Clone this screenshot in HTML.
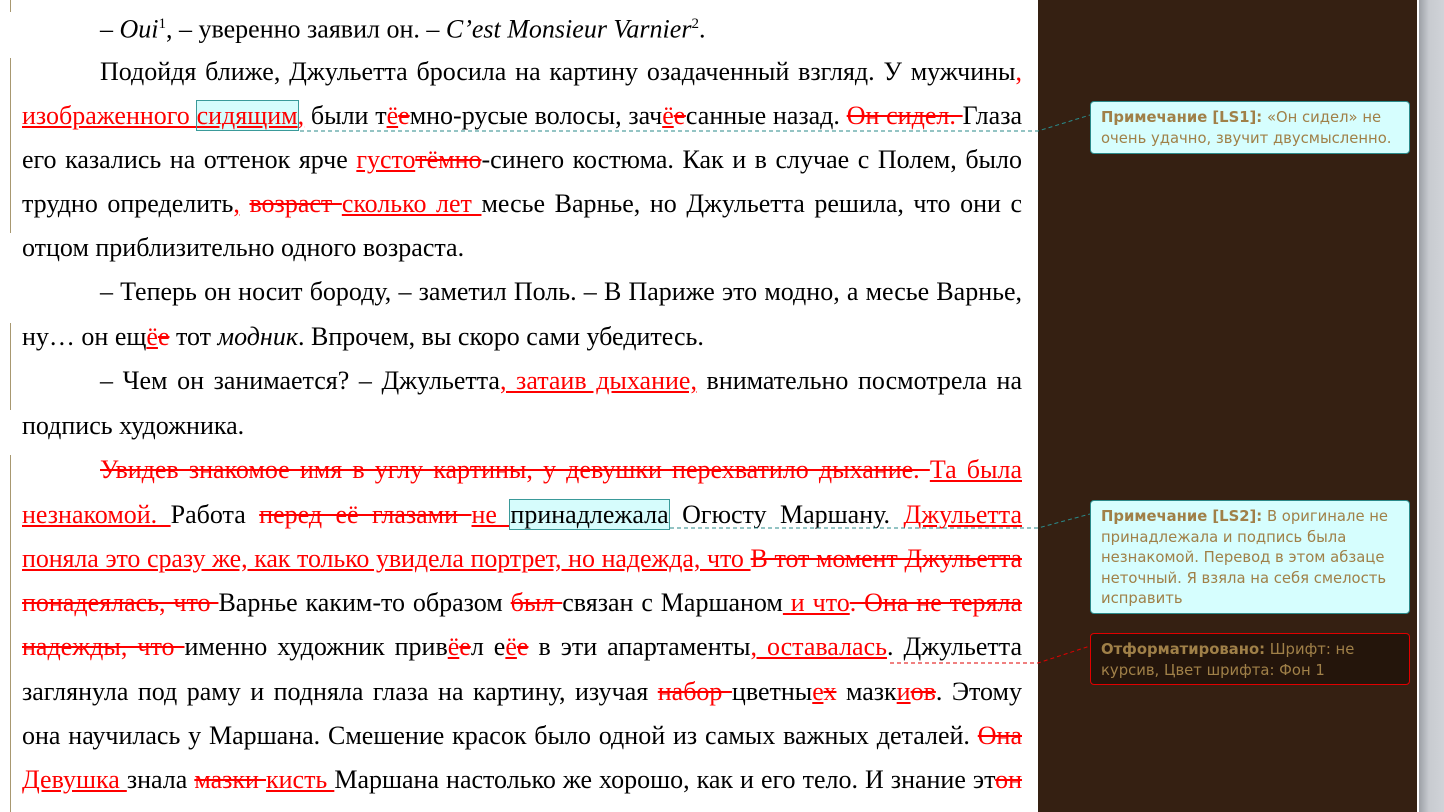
<!DOCTYPE html>
<html><head><meta charset="utf-8"><style>
body{margin:0;width:1444px;height:812px;overflow:hidden;background:#fff;position:relative;font-family:"Liberation Serif",serif;}
.page{position:absolute;left:0;top:0;width:1038px;height:812px;background:#fff;}
.ln{position:absolute;left:22px;width:1000px;font-size:26px;line-height:30px;margin-top:3px;color:#000;white-space:nowrap;text-align:justify;text-align-last:justify;}
.ln.l{text-align-last:left;}
.i{color:#f00;text-decoration:underline;}
.d{color:#f00;text-decoration:line-through;}
.h{background:#d6fcfc;outline:1px solid #3a9a9a;}
.bar{position:absolute;left:10px;width:1px;background:#a89870;}
.panel{position:absolute;left:1038px;top:0;width:379px;height:812px;background:#352012;}
.wl{position:absolute;left:1417px;top:0;width:2px;height:812px;background:#fff;}
.gr{position:absolute;left:1419px;top:0;width:25px;height:812px;background:linear-gradient(90deg,#9ca0a6,#c8cbd0 40%,#d0d3d8);}
.bal{position:absolute;left:1090px;width:298px;padding:6px 10px;font-family:"DejaVu Sans","Liberation Sans",sans-serif;font-size:14.8px;line-height:20.5px;color:#a08048;border-radius:4px;}
.bal b{color:#a08048;}
.c{background:#d6fefe;border:1px solid #2a8a8a;}
.f{background:#24150b;border:1px solid #e00000;}
</style></head><body>
<div class="page"></div>
<div class="bar" style="top:0;height:12px"></div>
<div class="bar" style="top:58px;height:175px"></div>
<div class="bar" style="top:323px;height:87px"></div>
<div class="bar" style="top:455px;height:357px"></div>

<div class="ln l" style="top:6px;padding-left:78px;width:922px">– <i>Oui</i><sup style="font-size:15px">1</sup>, – уверенно заявил он. – <i>C’est Monsieur Varnier</i><sup style="font-size:15px">2</sup>.</div>
<div class="ln" style="top:54px;padding-left:78px;width:922px">Подойдя ближе, Джульетта бросила на картину озадаченный взгляд. У мужчины<span class="i">,</span></div>
<div class="ln" style="top:98px"><span class="i">изображенного </span><span class="h"><span class="i">сидящим</span></span><span class="i">,</span> были т<span class="i">ё</span><span class="d">е</span>мно-русые волосы, зач<span class="i">ё</span><span class="d">е</span>санные назад. <span class="d">Он сидел. </span>Глаза</div>
<div class="ln" style="top:142px">его казались на оттенок ярче <span class="i">густо</span><span class="d">тёмно</span>-синего костюма. Как и в случае с Полем, было</div>
<div class="ln" style="top:186px">трудно определить<span class="i">,</span> <span class="d">возраст </span><span class="i">сколько лет </span>месье Варнье, но Джульетта решила, что они с</div>
<div class="ln l" style="top:230px">отцом приблизительно одного возраста.</div>
<div class="ln" style="top:274px;padding-left:78px;width:922px">– Теперь он носит бороду, – заметил Поль. – В Париже это модно, а месье Варнье,</div>
<div class="ln l" style="top:319px">ну… он ещ<span class="i">ё</span><span class="d">е</span> тот <i>модник</i>. Впрочем, вы скоро сами убедитесь.</div>
<div class="ln" style="top:363px;padding-left:78px;width:922px">– Чем он занимается? – Джульетта<span class="i">, затаив дыхание,</span> внимательно посмотрела на</div>
<div class="ln l" style="top:408px">подпись художника.</div>
<div class="ln" style="top:452px;padding-left:78px;width:922px"><span class="d">Увидев знакомое имя в углу картины, у девушки перехватило дыхание. </span><span class="i">Та была</span></div>
<div class="ln" style="top:497px"><span class="i">незнакомой. </span>Работа <span class="d">перед её глазами </span><span class="i">не </span><span class="h">принадлежала</span> Огюсту Маршану. <span class="i">Джульетта</span></div>
<div class="ln" style="top:541px;letter-spacing:-0.1px"><span class="i">поняла это сразу же, как только увидела портрет, но надежда, что </span><span class="d">В тот момент Джульетта</span></div>
<div class="ln" style="top:585px"><span class="d">понадеялась, что </span>Варнье каким-то образом <span class="d">был </span>связан с Маршаном<span class="i"> и что</span><span class="d">. Она не теряла</span></div>
<div class="ln" style="top:629px"><span class="d">надежды, что </span>именно художник прив<span class="i">ё</span><span class="d">е</span>л е<span class="i">ё</span><span class="d">е</span> в эти апартаменты<span class="i">, оставалась</span>. Джульетта</div>
<div class="ln" style="top:674px">заглянула под раму и подняла глаза на картину, изучая <span class="d">набор </span>цветны<span class="i">е</span><span class="d">х</span> мазк<span class="i">и</span><span class="d">ов</span>. Этому</div>
<div class="ln" style="top:718px">она научилась у Маршана. Смешение красок было одной из самых важных деталей. <span class="d">Она</span></div>
<div class="ln" style="top:762px"><span class="i">Девушка </span>знала <span class="d">мазки </span><span class="i">кисть </span>Маршана настолько же хорошо, как и его тело. И знание эт<span class="d">он</span></div>

<div class="panel"></div>
<div class="wl"></div>
<div class="gr"></div>
<svg style="position:absolute;left:0;top:0" width="1444" height="812">
<path d="M300 131 H1038 L1090 115" stroke="#2a8a8a" stroke-dasharray="4 3" fill="none"/>
<path d="M670 528 H1038 L1090 514" stroke="#2a8a8a" stroke-dasharray="4 3" fill="none"/>
<path d="M890 663 H1038 L1090 646" stroke="#e00000" stroke-dasharray="4 3" fill="none"/>
</svg>
<div class="bal c" style="top:101px;height:39px"><b>Примечание [LS1]:</b> «Он сидел» не очень удачно, звучит двусмысленно.</div>
<div class="bal c" style="top:500px;height:100px"><b>Примечание [LS2]:</b> В оригинале не принадлежала и подпись была незнакомой. Перевод в этом абзаце неточный. Я взяла на себя смелость исправить</div>
<div class="bal f" style="top:633px;height:38px"><b>Отформатировано:</b> Шрифт: не курсив, Цвет шрифта: Фон 1</div>
</body></html>
